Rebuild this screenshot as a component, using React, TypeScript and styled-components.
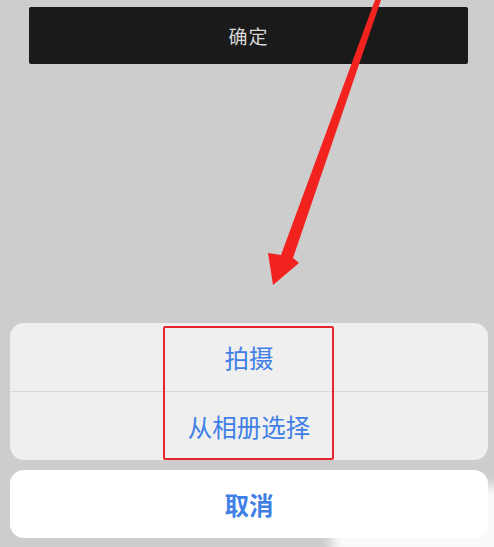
import React from "react"
import { styled, createGlobalStyle } from "styled-components"

const GlobalStyle = createGlobalStyle`
  html, body {
    margin: 0;
    padding: 0;
    background: #cdcdcd;
  }
  body {
    font-family: "Noto Sans CJK SC", "Noto Sans", sans-serif;
  }
`

const Page = styled.div`
  position: relative;
  width: 494px;
  height: 547px;
  overflow: hidden;
  display: flex;
  flex-direction: column;
  box-sizing: border-box;
  padding: 7px 0 9px;
  background: #cdcdcd;
`

const ConfirmButton = styled.div`
  margin: 0 26px 0 29px;
  height: 57px;
  background: #1a1a1a;
  border-radius: 2px;
  display: flex;
  align-items: center;
  justify-content: center;
  color: #d8d8d8;
  font-size: 19px;
  letter-spacing: 1px;
`

const Sheet = styled.div`
  margin-top: auto;
  padding: 0 6px 0 10px;
  display: flex;
  flex-direction: column;
  gap: 10px;
`

const Group = styled.div`
  background: #efefef;
  border-radius: 14px;
  overflow: hidden;
  display: flex;
  flex-direction: column;
`

const Item = styled.div<{ $bold?: boolean; $divider?: boolean }>`
  height: 68px;
  display: flex;
  align-items: center;
  justify-content: center;
  color: #3f7fe6;
  font-size: 24.5px;
  font-weight: ${(p) => (p.$bold ? 700 : 400)};
  border-top: ${(p) => (p.$divider ? "1px solid #d9d9d9" : "none")};
`

const CancelButton = styled(Group)`
  background: #ffffff;
`

const Highlight = styled.div`
  position: absolute;
  left: 163px;
  top: 326px;
  width: 167px;
  height: 130px;
  border: 2px solid #e8262a;
  border-radius: 2px;
`

const Arrow = styled.svg`
  position: absolute;
  left: 0;
  top: 0;
  pointer-events: none;
`

const Watermark = styled.div`
  position: absolute;
  left: 332px;
  top: 486px;
  width: 180px;
  height: 80px;
  background: #ffffff;
  filter: blur(6px);
  opacity: 0.9;
`

export default function App() {
  return (
    <>
      <GlobalStyle />
      <Page>
        <ConfirmButton>确定</ConfirmButton>

        <Sheet>
          <Group>
            <Item>拍摄</Item>
            <Item $divider>从相册选择</Item>
          </Group>
          <CancelButton>
            <Item $bold>取消</Item>
          </CancelButton>
        </Sheet>

        <Highlight />
        <Arrow width="494" height="547" viewBox="0 0 494 547">
          <polygon
            points="375,0 381,0 293,258 299,263 273,285 268,253 281,255"
            fill="#f2231f"
          />
        </Arrow>
        <Watermark />
      </Page>
    </>
  )
}
